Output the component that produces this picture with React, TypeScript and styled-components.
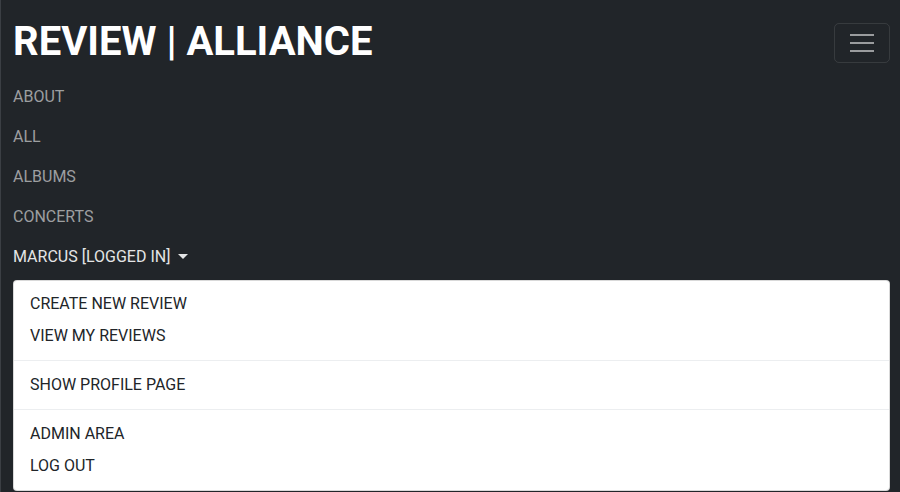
import React from "react";
import styled, { createGlobalStyle } from "styled-components";

const Global = createGlobalStyle`
  html, body { margin: 0; padding: 0; background: #212529; }
  body { font-family: Roboto, "Liberation Sans", sans-serif; }
  * { box-sizing: border-box; }
`;

const Navbar = styled.nav`
  background: #212529;
  min-height: 492px;
  border-left: 1px solid #3b3f44;
  padding: 8px 10px 0 12px;
  display: flex;
  flex-direction: column;
`;

const TopRow = styled.div`
  display: flex;
  align-items: center;
  justify-content: space-between;
`;

const Brand = styled.a`
  font-family: Roboto, "Liberation Sans", sans-serif;
  font-weight: 700;
  font-size: 40px;
  line-height: 58px;
  padding: 5px 0 6px;
  color: #fff;
  text-decoration: none;
  text-transform: uppercase;
`;

const Toggler = styled.button`
  width: 56px;
  height: 40px;
  border: 1px solid rgba(255, 255, 255, 0.1);
  border-radius: 5px;
  background: transparent;
  display: flex;
  flex-direction: column;
  align-items: center;
  justify-content: center;
  gap: 6px;
  padding: 0;
`;

const Bar = styled.span`
  display: block;
  width: 24px;
  height: 2px;
  background: rgba(255, 255, 255, 0.55);
`;

const NavList = styled.ul`
  list-style: none;
  margin: 0;
  padding: 0;
  display: flex;
  flex-direction: column;
`;

const NavItem = styled.li`
  display: flex;
  flex-direction: column;
`;

const NavLink = styled.a<{ $active?: boolean }>`
  font-size: 16px;
  line-height: 24px;
  padding: 8px 0;
  color: ${(p) => (p.$active ? "#e4e5e6" : "rgba(255, 255, 255, 0.57)")};
  text-decoration: none;
  text-transform: uppercase;
  display: flex;
  align-items: center;
`;

const Caret = styled.span`
  display: inline-block;
  margin-left: 8px;
  margin-top: -1px;
  width: 0;
  height: 0;
  border-top: 5px solid currentColor;
  border-left: 5px solid transparent;
  border-right: 5px solid transparent;
`;

const Menu = styled.ul`
  list-style: none;
  margin: 3px 0 0 0;
  padding: 7px 0 8px;
  background: #fff;
  border: 1px solid rgba(0, 0, 0, 0.15);
  border-radius: 4px;
`;

const MenuItem = styled.li`
  font-size: 16px;
  line-height: 24px;
  padding: 4px 16px;
  color: #212529;
  text-transform: uppercase;
`;

const Divider = styled.li`
  height: 0;
  margin: 8px 0;
  border-top: 1px solid #eceef0;
`;

export default function App() {
  return (
    <>
      <Global />
      <Navbar>
        <TopRow>
          <Brand href="#">Review | Alliance</Brand>
          <Toggler aria-label="Toggle navigation">
            <Bar />
            <Bar />
            <Bar />
          </Toggler>
        </TopRow>
        <NavList>
          <NavItem><NavLink href="#">About</NavLink></NavItem>
          <NavItem><NavLink href="#">All</NavLink></NavItem>
          <NavItem><NavLink href="#">Albums</NavLink></NavItem>
          <NavItem><NavLink href="#">Concerts</NavLink></NavItem>
          <NavItem>
            <NavLink href="#" $active>
              Marcus [logged in]
              <Caret />
            </NavLink>
            <Menu>
              <MenuItem>Create new review</MenuItem>
              <MenuItem>View my reviews</MenuItem>
              <Divider />
              <MenuItem>Show profile page</MenuItem>
              <Divider />
              <MenuItem>Admin area</MenuItem>
              <MenuItem>Log out</MenuItem>
            </Menu>
          </NavItem>
        </NavList>
      </Navbar>
    </>
  );
}
